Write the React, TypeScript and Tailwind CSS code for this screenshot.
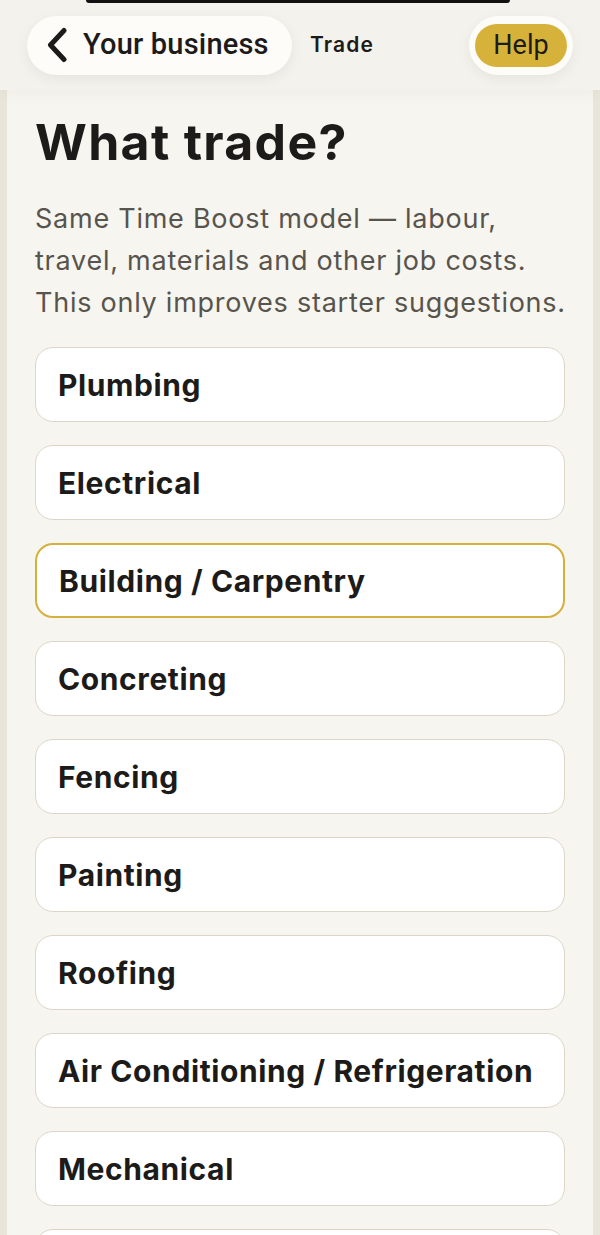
const trades = [
  "Plumbing",
  "Electrical",
  "Building / Carpentry",
  "Concreting",
  "Fencing",
  "Painting",
  "Roofing",
  "Air Conditioning / Refrigeration",
  "Mechanical",
  "Landscaping",
];

function BackChevron() {
  return (
    <svg width="22" height="36" viewBox="0 0 22 36" fill="none" aria-hidden>
      <path d="M18 3.5 4.5 18 18 32.5" stroke="#1c1b19" strokeWidth="5" strokeLinecap="round" strokeLinejoin="round" />
    </svg>
  );
}

export default function App() {
  const selected = "Building / Carpentry";

  return (
    <div className="relative h-[1235px] w-[600px] overflow-hidden bg-[#e8e5da] font-['Inter',sans-serif] text-[#1c1b19]">
      {/* top notch edge */}
      <div className="absolute left-[86px] top-0 z-20 h-[3px] w-[424px] rounded-b-full bg-[#111]" />

      {/* header */}
      <header className="relative z-10 flex h-[90px] items-center bg-[#f4f2ec] px-[27px] shadow-[0_6px_14px_rgba(0,0,0,0.03)]">
        <button className="flex h-[59px] w-[265px] items-center gap-[15px] rounded-full bg-[#fdfcf9] pl-[19px] shadow-[0_4px_14px_rgba(0,0,0,0.06)]">
          <BackChevron />
          <span className="font-['Roboto',sans-serif] text-[29px] font-medium tracking-[0.2px]">Your business</span>
        </button>
        <span className="ml-[18px] text-[21px] font-semibold tracking-[1.1px]">Trade</span>
        <div className="ml-auto flex h-[59px] w-[104px] items-center justify-center rounded-full bg-[#fdfcf9] shadow-[0_4px_14px_rgba(0,0,0,0.06)]">
          <span className="flex h-[43px] w-[92px] items-center justify-center rounded-full bg-[#d6b23a] font-['Roboto',sans-serif] text-[27px] text-[#1c1b19]">
            Help
          </span>
        </div>
      </header>

      {/* panel */}
      <main className="mx-[7px] bg-[#f7f5ef] px-[28px] pt-[22px]">
        <h1 className="text-[50px] font-bold leading-[60px] tracking-[1.3px]">What trade?</h1>
        <p className="mt-[26px] w-[545px] text-[27px] leading-[42px] tracking-[0.75px] text-[#57544d]">
          Same Time Boost model — labour, travel, materials and other job costs. This only improves starter suggestions.
        </p>

        <div className="mt-[23px] flex flex-col gap-[23px] pb-10">
          {trades.map((t) => (
            <button
              key={t}
              className={
                t === selected
                  ? "flex h-[75px] w-[530px] items-center rounded-[18px] border-2 border-[#d4b03c] bg-white px-[22px] pt-[2px] text-left text-[30px] font-bold tracking-[0.6px]"
                  : "flex h-[75px] w-[530px] items-center rounded-[18px] border border-[#ddd6c8] bg-white px-[22px] pt-[2px] text-left text-[30px] font-bold tracking-[0.6px]"
              }
            >
              {t}
            </button>
          ))}
        </div>
      </main>
    </div>
  );
}
